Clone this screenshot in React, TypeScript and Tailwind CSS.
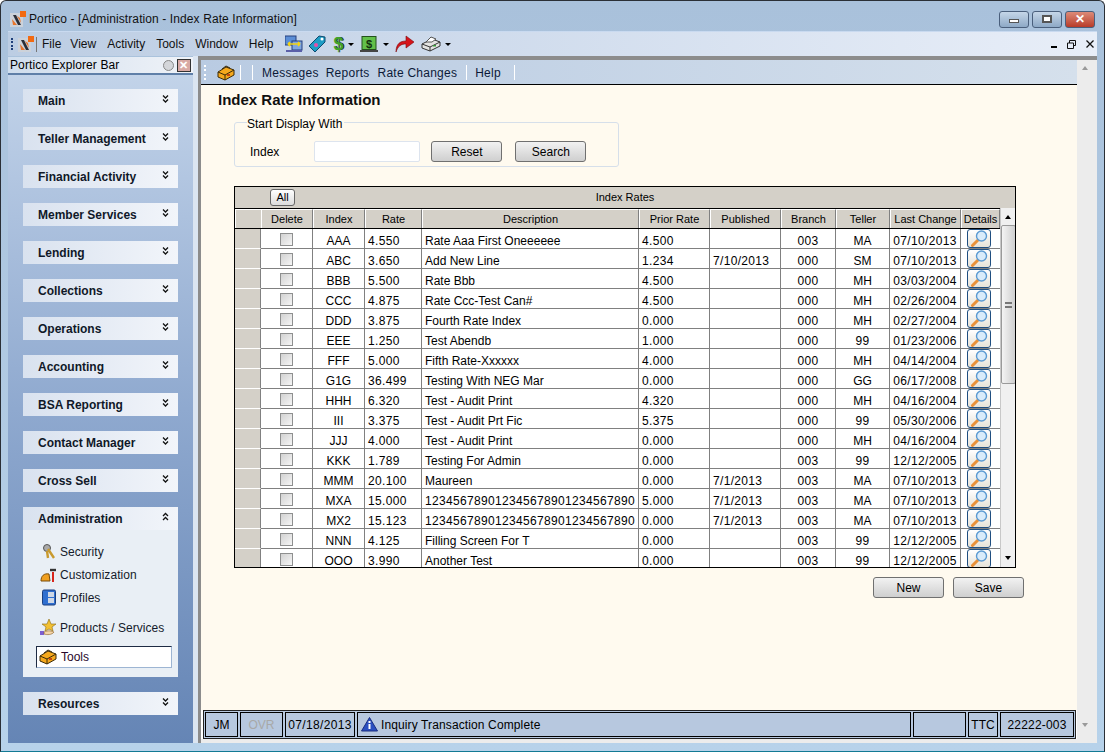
import type { ReactNode } from "react"

const rows = [
  ["AAA", "4.550", "Rate Aaa First Oneeeeee", "4.500", "", "003", "MA", "07/10/2013"],
  ["ABC", "3.650", "Add New Line", "1.234", "7/10/2013", "000", "SM", "07/10/2013"],
  ["BBB", "5.500", "Rate Bbb", "4.500", "", "000", "MH", "03/03/2004"],
  ["CCC", "4.875", "Rate Ccc-Test Can#", "4.500", "", "000", "MH", "02/26/2004"],
  ["DDD", "3.875", "Fourth Rate Index", "0.000", "", "000", "MH", "02/27/2004"],
  ["EEE", "1.250", "Test Abendb", "1.000", "", "000", "99", "01/23/2006"],
  ["FFF", "5.000", "Fifth Rate-Xxxxxx", "4.000", "", "000", "MH", "04/14/2004"],
  ["G1G", "36.499", "Testing With NEG Mar", "0.000", "", "000", "GG", "06/17/2008"],
  ["HHH", "6.320", "Test - Audit Print", "4.320", "", "000", "MH", "04/16/2004"],
  ["III", "3.375", "Test - Audit Prt Fic", "5.375", "", "000", "99", "05/30/2006"],
  ["JJJ", "4.000", "Test - Audit Print", "0.000", "", "000", "MH", "04/16/2004"],
  ["KKK", "1.789", "Testing For Admin", "0.000", "", "003", "99", "12/12/2005"],
  ["MMM", "20.100", "Maureen", "0.000", "7/1/2013", "003", "MA", "07/10/2013"],
  ["MXA", "15.000", "123456789012345678901234567890", "5.000", "7/1/2013", "003", "MA", "07/10/2013"],
  ["MX2", "15.123", "123456789012345678901234567890", "0.000", "7/1/2013", "003", "MA", "07/10/2013"],
  ["NNN", "4.125", "Filling Screen For T", "0.000", "", "003", "99", "12/12/2005"],
  ["OOO", "3.990", "Another Test", "0.000", "", "003", "99", "12/12/2005"],
]

const groups = [
  "Main",
  "Teller Management",
  "Financial Activity",
  "Member Services",
  "Lending",
  "Collections",
  "Operations",
  "Accounting",
  "BSA Reporting",
  "Contact Manager",
  "Cross Sell",
]

const gridCols = "grid-cols-[26px_52px_52px_57px_217px_71px_71px_55px_54px_71px_39px]"

function PorticoLogo() {
  return (
    <svg width="16" height="16" viewBox="0 0 16 16">
      <rect x="0" y="2" width="13" height="14" fill="#ccd2da" />
      <rect x="10" y="0" width="6" height="6" fill="#f26a12" />
      <path d="M3 4 L6 4 L11 14 L8 14 Z" fill="#2b2f38" />
      <path d="M2 8 L7 14 L3 14 Z" fill="#e8742a" />
      <path d="M7 5 L10 7 L11 12 Z" fill="#e8742a" />
    </svg>
  )
}

function Toolbox() {
  return (
    <svg width="18" height="16" viewBox="0 0 18 16">
      <path d="M1 7 L9 2 L17 5 L17 10 L8 15 L1 12 Z" fill="#f5a81c" stroke="#3a2a08" strokeWidth="1" />
      <path d="M1 7 L8 10 L17 5" fill="none" stroke="#3a2a08" strokeWidth="1" />
      <path d="M8 10 L8 15" stroke="#3a2a08" strokeWidth="1" />
      <path d="M5 4 L9 1 L13 3" fill="none" stroke="#3a2a08" strokeWidth="1" />
      <rect x="10" y="9" width="3" height="2" fill="#c8480c" />
    </svg>
  )
}

function Magnifier() {
  return (
    <svg width="17" height="17" viewBox="0 0 17 17">
      <path d="M1.5 15.5 L7 10" stroke="#e8913a" strokeWidth="3" strokeLinecap="round" />
      <circle cx="10.5" cy="6" r="5" fill="#d9ecfb" stroke="#5b9ad2" strokeWidth="1.4" />
    </svg>
  )
}

function Caret() {
  return <span className="ml-1 h-0 w-0 border-x-[3px] border-t-[3px] border-x-transparent border-t-black" />
}

function ToolbarIcons() {
  return (
    <div className="ml-[11px] flex items-center">
      <svg width="18" height="18" viewBox="0 0 18 18">
        <rect x="0" y="1" width="11" height="9" fill="#5b8ed6" stroke="#26407e" />
        <rect x="7" y="6" width="10" height="9" fill="#7fa6e0" stroke="#26407e" />
        <path d="M3 9 H15 M3 9 L5 7 M3 9 L5 11 M15 9 L13 7 M15 9 L13 11" stroke="#f5d410" strokeWidth="1.6" fill="none" />
        <rect x="1" y="15" width="16" height="2" fill="#5a5fa8" />
      </svg>
      <svg className="ml-[5px]" width="18" height="18" viewBox="0 0 18 18">
        <path d="M1 11 L11 1 L17 2 L17 7 L7 17 Z" fill="#1d9cc4" stroke="#0d4a70" />
        <circle cx="8" cy="10" r="2" fill="#e64fa8" />
        <circle cx="14" cy="4" r="1.5" fill="#fff" />
      </svg>
      <span className="ml-[8px] text-[18px] font-bold leading-none text-[#3fa32a] [text-shadow:1px_0_0_#222]">$</span>
      <Caret />
      <svg className="ml-[6px]" width="19" height="17" viewBox="0 0 19 17">
        <rect x="2" y="0.5" width="14" height="13" fill="#62c04a" stroke="#23501c" />
        <text x="9" y="11.5" textAnchor="middle" fontSize="11" fontWeight="700" fontFamily="Liberation Sans" fill="#12300e">$</text>
        <rect x="0" y="14" width="18" height="2" fill="#444" />
      </svg>
      <Caret />
      <svg className="ml-[6px]" width="20" height="18" viewBox="0 0 20 18">
        <path d="M1 17 C1 9 5 6 11 6 L11 1 L19 7 L11 13 L11 9 C6 9 3 11 1 17 Z" fill="#d6141a" stroke="#7c0a0e" strokeWidth="0.6" />
      </svg>
      <svg className="ml-[6px]" width="20" height="16" viewBox="0 0 20 16">
        <path d="M1 8 L11 3 L19 6 L19 10 L9 15 L1 12 Z" fill="#e4e4e2" stroke="#333" />
        <path d="M5 6 L10 1 L15 3 L11 6 Z" fill="#fff" stroke="#555" />
        <path d="M1 8 L9 11 L19 6 M9 11 L9 15" stroke="#333" fill="none" />
        <rect x="12" y="9" width="3" height="1.5" fill="#3a9a3a" />
      </svg>
      <Caret />
    </div>
  )
}

function Chevrons({ up }: { up?: boolean }) {
  const d = up ? "M1 4 L3.5 1.5 L6 4 M1 8 L3.5 5.5 L6 8" : "M1 1.5 L3.5 4 L6 1.5 M1 5.5 L3.5 8 L6 5.5"
  return (
    <svg width="7" height="10" viewBox="0 0 7 10" className="absolute right-[9px] top-[5px]">
      <path d={d} fill="none" stroke="#111" strokeWidth="1.3" />
    </svg>
  )
}

function GroupHeader({ label, up }: { label: string; up?: boolean }) {
  return (
    <div className="relative flex h-[23px] items-center bg-gradient-to-r from-[#d9e2ef] to-[#f2f5fa] pl-[15px] text-[12px] font-bold text-[#101828]">
      {label}
      <Chevrons up={up} />
    </div>
  )
}

function AdminItem({ icon, label, className }: { icon: ReactNode; label: string; className: string }) {
  return (
    <div className={`flex items-center pl-[14px] ${className}`}>
      <span className="flex w-[23px] justify-center">{icon}</span>
      <span className="text-[12px] tracking-[0.05px] text-[#141a2a]">{label}</span>
    </div>
  )
}

function Sidebar() {
  return (
    <div className="flex w-[185px] shrink-0 flex-col">
      <div className="mt-[1px] flex h-[18px] items-center justify-between border-b-2 border-[#5f7fa8] bg-gradient-to-r from-[#cfdded] to-[#f0f3f8] pl-[2px] pr-[2px] text-[12px] tracking-[0.1px]">
        <span>Portico Explorer Bar</span>
        <span className="flex items-center gap-[3px]">
          <span className="h-[11px] w-[11px] rounded-full border border-[#888] bg-[#d4d6da]" />
          <span className="flex h-[13px] w-[14px] items-center justify-center border border-[#333] bg-[#d8a9a4] text-[11px] font-bold leading-none text-white">
            ✕
          </span>
        </span>
      </div>
      <div className="flex flex-1 flex-col bg-gradient-to-b from-[#c2d3e9] via-[#8fa9cf] to-[#6585b5] px-[15px] pt-[14px]">
        <div className="flex flex-col gap-[15px]">
          {groups.map((g) => (
            <GroupHeader key={g} label={g} />
          ))}
          <div>
            <GroupHeader label="Administration" up />
            <div className="flex h-[147px] flex-col bg-[#e9eff5] pt-[10px]">
              <AdminItem
                className="h-[24px]"
                label="Security"
                icon={
                  <svg width="16" height="16" viewBox="0 0 16 16">
                    <circle cx="6" cy="4" r="3.5" fill="#a9a9a9" stroke="#555" />
                    <path d="M6 7 L7 14 M7 5 L13 14" stroke="#c99a2e" strokeWidth="2.4" />
                  </svg>
                }
              />
              <AdminItem
                className="h-[22px]"
                label="Customization"
                icon={
                  <svg width="17" height="15" viewBox="0 0 17 15">
                    <path d="M1 13 C1 8 4 5 9 6 L10 13 Z" fill="#f0a020" stroke="#7a4c08" />
                    <path d="M13 4 L13 14" stroke="#d8261c" strokeWidth="2" />
                    <path d="M10 2 H16" stroke="#333" strokeWidth="2.4" />
                  </svg>
                }
              />
              <AdminItem
                className="h-[23px]"
                label="Profiles"
                icon={
                  <svg width="14" height="17" viewBox="0 0 14 17">
                    <rect x="0.5" y="1" width="13" height="15" rx="1.5" fill="#2f6fd0" stroke="#1a3f80" />
                    <rect x="6" y="3" width="6" height="5" fill="#cfd8e6" />
                    <rect x="6" y="9" width="6" height="5" fill="#cfd8e6" />
                  </svg>
                }
              />
              <AdminItem
                className="mt-[7px] h-[23px]"
                label="Products / Services"
                icon={
                  <svg width="17" height="17" viewBox="0 0 17 17">
                    <path d="M9 0 L11 5 L16 5 L12 8 L13 12 L9 10 L5 12 L6 8 L2 5 L7 5 Z" fill="#f2c033" stroke="#8a6a14" strokeWidth="0.6" />
                    <rect x="0" y="12" width="4" height="4" fill="#7d5fd0" />
                    <path d="M4 13 C8 11 12 12 14 13 C12 16 7 16 4 15 Z" fill="#f4d6a8" stroke="#8a5a20" strokeWidth="0.6" />
                  </svg>
                }
              />
              <div className="ml-[13px] mt-[7px] flex h-[22px] w-[136px] items-center border border-[#1e2b44] border-b-[#9db5d3] border-r-[#9db5d3] bg-white pl-[2px] text-[12px] text-[#28082a]">
                <Toolbox />
                <span className="ml-[4px]">Tools</span>
              </div>
            </div>
          </div>
          <GroupHeader label="Resources" />
        </div>
      </div>
    </div>
  )
}

function HeaderCell({ children, last }: { children: ReactNode; last?: boolean }) {
  return (
    <div
      className={`flex items-center justify-center border-l border-l-white border-t border-t-white bg-[#d4d0c8] text-[11px] ${last ? "" : "border-r border-r-[#808080]"}`}
    >
      {children}
    </div>
  )
}

function Cell({ children, align }: { children?: string; align?: "center" | "left" }) {
  // digits render a bit wider in the original font
  const numeric = /^[\d./-]+$/.test(children ?? "")
  return (
    <div
      className={`flex items-center overflow-hidden whitespace-nowrap border-b border-r border-[#808080] bg-white pt-[5px] text-[12px] ${align === "left" ? "pl-[3px]" : "justify-center"} ${numeric ? "tracking-[0.33px]" : ""}`}
    >
      {children}
    </div>
  )
}

function RatesGrid() {
  return (
    <div className="ml-[33px] mt-[19px] h-[382px] w-[782px] overflow-hidden border border-black">
      <div className="relative flex h-[21px] items-center justify-center bg-[#d4d0c8] text-[11px]">
        Index Rates
        <span className="absolute left-[35px] top-[2px] flex h-[17px] w-[25px] items-center justify-center rounded-[3px] border border-[#666] bg-gradient-to-b from-white to-[#dcdcdc] text-[11px]">
          All
        </span>
      </div>
      <div className="flex h-[359px]">
        <div className="w-[765px] overflow-hidden">
          <div className={`grid h-[21px] border-y border-black ${gridCols}`}>
            <HeaderCell last> </HeaderCell>
            {["Delete", "Index", "Rate", "Description", "Prior Rate", "Published", "Branch", "Teller", "Last Change", "Details"].map((h) => (
              <HeaderCell key={h}>{h}</HeaderCell>
            ))}
          </div>
          {rows.map((r) => (
            <div key={r[0]} className={`grid h-[20px] ${gridCols}`}>
              <div className="border-b border-r border-b-white border-r-[#808080] bg-[#d4d0c8]" />
              <div className="flex items-center justify-center border-b border-r border-[#808080] bg-white">
                <span className="mt-[1px] h-[13px] w-[13px] border border-[#8e8f8f] bg-gradient-to-br from-[#d2d2d2] to-[#f6f6f6]" />
              </div>
              <Cell>{r[0]}</Cell>
              <Cell align="left">{r[1]}</Cell>
              <Cell align="left">{r[2]}</Cell>
              <Cell align="left">{r[3]}</Cell>
              <Cell align="left">{r[4]}</Cell>
              <Cell>{r[5]}</Cell>
              <Cell>{r[6]}</Cell>
              <Cell>{r[7]}</Cell>
              <div className="flex items-center border-b border-[#808080] bg-white pl-[6px]">
                <span className="flex h-[19px] w-[24px] items-center justify-center rounded-[3px] border border-[#1f4e80] bg-gradient-to-b from-white to-[#e6e2d8]">
                  <Magnifier />
                </span>
              </div>
            </div>
          ))}
        </div>
        <div className="flex w-[15px] flex-col items-center border-l border-[#c8c8c8] bg-[#f0f0f0]">
          <span className="mt-[7px] h-0 w-0 border-x-[3px] border-b-[4px] border-x-transparent border-b-black" />
          <span className="mt-[6px] flex h-[159px] w-[15px] items-center justify-center rounded-[2px] border border-[#9a9a9a] bg-gradient-to-r from-[#f4f4f4] to-[#cfcfcf]">
            <span className="h-[6px] w-[7px] border-y-2 border-double border-[#777]" />
          </span>
          <span className="mb-[7px] mt-auto h-0 w-0 border-x-[3px] border-t-[4px] border-x-transparent border-t-black" />
        </div>
      </div>
    </div>
  )
}

function ActionButton({ label, className }: { label: string; className: string }) {
  return (
    <button
      type="button"
      className={`flex h-[21px] w-[71px] items-center justify-center rounded-[3px] border border-[#707070] bg-gradient-to-b from-[#f2f2f2] to-[#cfcfcf] text-[12px] ${className}`}
    >
      {label}
    </button>
  )
}

function StatusCell({ children, className }: { children?: ReactNode; className: string }) {
  return <div className={`flex items-center border border-black ${className}`}>{children}</div>
}

function MainPane() {
  return (
    <div className="flex min-w-0 flex-1 flex-col border-l-[3px] border-t-[4px] border-l-[#8c8c8c] border-t-[#8c8c8c] bg-[#ececec]">
      <div className="flex flex-1">
        <div className="flex flex-1 flex-col">
          <div className="flex h-[25px] items-center border-b border-black bg-gradient-to-r from-[#b9cbe2] to-[#d5e0ec] pt-[1px] text-[12px] tracking-[0.25px] text-[#0c1a38]">
            <span className="ml-[3px] flex h-[15px] w-[2px] flex-col justify-between">
              <span className="h-[2px] bg-white" />
              <span className="h-[2px] bg-white" />
              <span className="h-[2px] bg-white" />
              <span className="h-[2px] bg-white" />
            </span>
            <span className="ml-[11px]">
              <Toolbox />
            </span>
            <span className="ml-[5px] h-[15px] w-px bg-white" />
            <span className="ml-[11px] h-[15px] w-px bg-white" />
            <span className="ml-[9px]">Messages</span>
            <span className="ml-[7px]">Reports</span>
            <span className="ml-[8px]">Rate Changes</span>
            <span className="ml-[9px] h-[15px] w-px bg-white" />
            <span className="ml-[8px]">Help</span>
            <span className="ml-[13px] h-[15px] w-px bg-white" />
          </div>
          <div className="flex flex-1 flex-col bg-[#fffaef]">
            <h1 className="ml-[17px] mt-[6px] text-[15px] font-bold leading-[18px] text-[#101010]">Index Rate Information</h1>
            <div className="relative ml-[33px] mt-[13px] flex h-[45px] w-[385px] items-center rounded-[3px] border border-[#d6dfea] pt-[14px]">
              <span className="absolute -top-[6px] left-[12px] bg-[#fffaef] pr-[2px] text-[12px] leading-[14px]">Start Display With</span>
              <span className="ml-[15px] text-[12px]">Index</span>
              <span className="ml-[35px] h-[21px] w-[106px] rounded-[2px] border border-[#dde4ee] bg-white" />
              <ActionButton label="Reset" className="ml-[11px]" />
              <ActionButton label="Search" className="ml-[13px]" />
            </div>
            <RatesGrid />
            <div className="mt-[9px] flex">
              <ActionButton label="New" className="ml-[672px]" />
              <ActionButton label="Save" className="ml-[9px]" />
            </div>
          </div>
        </div>
        <div className="flex w-[20px] flex-col bg-[#ececec] pl-[5px]">
          <span className="mt-[6px] h-0 w-0 border-x-[3px] border-b-[4px] border-x-transparent border-b-[#9a9a9a]" />
        </div>
      </div>
      <div className="flex bg-white">
        <div className="ml-[2px] mr-[1px] flex h-[29px] min-w-0 flex-1 gap-[2px] border border-[#222] bg-[#b7c8df] p-[1px] text-[12px]">
          <StatusCell className="w-[33px] justify-center">JM</StatusCell>
          <StatusCell className="w-[43px] justify-center text-[#a8a8a8]">OVR</StatusCell>
          <StatusCell className="w-[70px] justify-center tracking-[0.33px]">07/18/2013</StatusCell>
          <StatusCell className="w-[554px] pl-[3px]">
            <svg width="17" height="15" viewBox="0 0 17 15">
              <path d="M8.5 0.5 L16.5 14 L0.5 14 Z" fill="#2a4fc0" stroke="#1a2f80" />
              <rect x="7.5" y="4" width="2" height="2" fill="#fff" />
              <rect x="7.5" y="7" width="2" height="5" fill="#fff" />
            </svg>
            <span className="ml-[3px] tracking-[0.12px]">Inquiry Transaction Complete</span>
          </StatusCell>
          <StatusCell className="w-[53px]" />
          <StatusCell className="w-[30px] justify-center">TTC</StatusCell>
          <StatusCell className="min-w-0 flex-1 justify-center tracking-[0.2px]">22222-003</StatusCell>
        </div>
        <div className="flex w-[20px] bg-[#ececec] pl-[5px] pt-[13px]">
          <span className="h-0 w-0 border-x-[3px] border-t-[4px] border-x-transparent border-t-[#9a9a9a]" />
        </div>
      </div>
      <div className="h-[4px] shrink-0 bg-[#ececec]" />
    </div>
  )
}

function WindowButton({ children, className }: { children: ReactNode; className: string }) {
  return (
    <span className={`flex h-[17px] w-[30px] items-center justify-center rounded-[3px] border border-[#4a5f7c] ${className}`}>{children}</span>
  )
}

export default function App() {
  return (
    <div
      className="flex h-[752px] w-[1105px] flex-col overflow-hidden rounded-t-[6px] border-x border-y border-[#2a2f36] border-b-[#127a94] bg-gradient-to-b from-[#a9c1db] to-[#b7d2ea] text-black"
      style={{ fontFamily: '"Liberation Sans", sans-serif' }}
    >
      <div className="flex h-[30px] shrink-0 items-center pl-[9px] pr-[9px] pt-[6px]">
        <PorticoLogo />
        <span className="ml-[3px] text-[12px] tracking-[0.1px] text-[#111]">Portico - [Administration - Index Rate Information]</span>
        <div className="ml-auto flex gap-[3px]">
          <WindowButton className="bg-gradient-to-b from-[#c5d6e8] to-[#8ea9c6]">
            <span className="mt-[3px] h-[4px] w-[10px] border border-[#555] bg-white" />
          </WindowButton>
          <WindowButton className="bg-gradient-to-b from-[#c5d6e8] to-[#8ea9c6]">
            <span className="h-[8px] w-[10px] border-2 border-[#555] bg-white" />
          </WindowButton>
          <WindowButton className="bg-gradient-to-b from-[#dc8a78] to-[#b83a28] text-[12px] font-bold leading-none text-white">
            ✕
          </WindowButton>
        </div>
      </div>
      <div className="mx-[7px] flex min-h-0 flex-1 flex-col">
        <div className="flex h-[25px] shrink-0 items-center border-t border-[#c9daf0] bg-gradient-to-r from-[#bccde3] to-[#e8eef8] text-[12px] text-[#111]">
          <span className="ml-[3px] flex h-[13px] w-[2px] flex-col justify-between">
            <span className="h-[2px] bg-[#1f3f7a]" />
            <span className="h-[2px] bg-[#1f3f7a]" />
            <span className="h-[2px] bg-[#1f3f7a]" />
            <span className="h-[2px] bg-[#1f3f7a]" />
          </span>
          <span className="ml-[5px]">
            <PorticoLogo />
          </span>
          <span className="ml-[2px] h-[15px] w-px bg-[#777]" />
          <span className="ml-[5px]">File</span>
          <span className="ml-[9px]">View</span>
          <span className="ml-[11px]">Activity</span>
          <span className="ml-[11px]">Tools</span>
          <span className="ml-[11px]">Window</span>
          <span className="ml-[11px]">Help</span>
          <ToolbarIcons />
          <div className="ml-auto mr-[3px] flex items-center gap-[10px]">
            <span className="mt-[6px] h-[2px] w-[6px] bg-black" />
            <svg width="9" height="9" viewBox="0 0 9 9">
              <path d="M2.5 0.5 H8.5 V5.5 H6.5 M0.5 3 H6.5 V8.5 H0.5 Z M2.5 0.5 V3" fill="none" stroke="#111" />
            </svg>
            <svg width="8" height="8" viewBox="0 0 8 8">
              <path d="M0.5 0.5 L7.5 7.5 M7.5 0.5 L0.5 7.5" stroke="#111" strokeWidth="1.3" />
            </svg>
          </div>
        </div>
        <div className="flex min-h-0 flex-1">
          <Sidebar />
          <span className="w-[5px] shrink-0 bg-[#dbe5f1]" />
          <MainPane />
        </div>
      </div>
      <div className="h-[8px] shrink-0" />
    </div>
  )
}
